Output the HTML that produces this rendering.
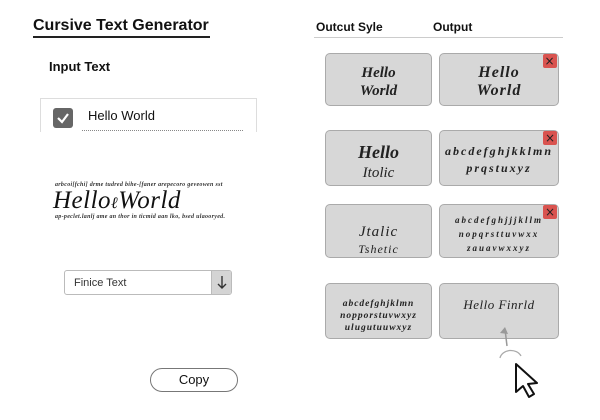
<!DOCTYPE html>
<html><head><style>
*{margin:0;padding:0;box-sizing:border-box}
body{width:600px;height:420px;background:#fff;position:relative;overflow:hidden;font-family:"Liberation Sans",sans-serif;color:#111}
.a{position:absolute}
.card{position:absolute;background:#d7d7d7;border:1px solid #aaa;border-radius:5px;text-align:center;font-family:"Liberation Serif",serif;font-style:italic;font-weight:bold;color:#222}
.x{position:absolute;right:1px;top:0;width:14px;height:14px;background:#d9534f;color:#222;font:12px/14px "DejaVu Sans",sans-serif;text-align:center;border-radius:2px}
.tiny{font-family:"Liberation Serif",serif;font-style:italic;font-weight:bold;font-size:6px;color:#333;letter-spacing:.3px;white-space:nowrap}
</style></head><body>
<div class="a" style="left:33px;top:17px;font-size:16px;font-weight:bold">Cursive Text Generator</div>
<div class="a" style="left:33px;top:36px;width:177px;height:2px;background:#222"></div>
<div class="a" style="left:49px;top:59px;font-size:13px;font-weight:bold">Input Text</div>
<div class="a" style="left:40px;top:98px;width:217px;height:34px;border:1px solid #ddd;border-bottom:none"></div>
<div class="a" style="left:53px;top:108px;width:20px;height:20px;background:#666;border-radius:3px"><svg width="20" height="20"><path d="M5 10l4 4 6-8" stroke="#fff" stroke-width="2.2" fill="none"/></svg></div>
<div class="a" style="left:88px;top:108px;font-size:13px">Hello World</div>
<div class="a" style="left:82px;top:130px;width:161px;border-top:1px dotted #888"></div>
<div class="a tiny" style="left:55px;top:182px">arbcoi[fchi] drme tudred bihe-[faner arepecoro geveowen sst</div>
<div class="a" style="left:53px;top:187px;font-family:'Liberation Serif',serif;font-style:italic;font-size:25px;letter-spacing:.5px">Hello<span style="font-size:16px">&#x2113;</span>World</div>
<div class="a tiny" style="left:55px;top:214px">ap-peclet.lanlj ame an thor in ticmid aan lko, bsed ulaooryed.</div>
<div class="a" style="left:64px;top:270px;width:168px;height:25px;border:1px solid #bbb;border-radius:3px;overflow:hidden;background:#fff">
<div class="a" style="left:9px;top:6px;font-size:11px;color:#333">Finice Text</div>
<div class="a" style="right:0;top:0;width:20px;height:23px;background:#d4d4d4;border-left:1px solid #bbb"><svg width="20" height="23"><path d="M10 5v12M6 13l4 4 4-4" stroke="#333" stroke-width="1.4" fill="none"/></svg></div></div>
<div class="a" style="left:150px;top:368px;width:88px;height:24px;border:1px solid #777;border-radius:12px;text-align:center;font-size:13px;line-height:22px">Copy</div>
<div class="a" style="left:316px;top:20px;font-size:12px;font-weight:bold">Outcut Syle</div>
<div class="a" style="left:433px;top:20px;font-size:12px;font-weight:bold">Output</div>
<div class="a" style="left:314px;top:37px;width:249px;height:1px;background:#ccc"></div>
<div class="card" style="left:325px;top:53px;width:107px;height:53px;font-size:15px;line-height:18px;padding-top:10px">Hello<br>World</div>
<div class="card" style="left:439px;top:53px;width:120px;height:53px;font-size:16px;line-height:18px;padding-top:10px;letter-spacing:1px">Hello<br>World<div class="x">×</div></div>
<div class="card" style="left:325px;top:130px;width:107px;height:56px;font-size:18px;line-height:19px;padding-top:12px">Hello<br><span style="font-size:15px;font-weight:normal">Itolic</span></div>
<div class="card" style="left:439px;top:130px;width:120px;height:56px;font-size:12px;line-height:17px;padding-top:12px;letter-spacing:2px">abcdefghjkklmn<br>prqstuxyz<div class="x" style="letter-spacing:0">×</div></div>
<div class="card" style="left:325px;top:204px;width:107px;height:54px;font-size:15px;font-weight:normal;line-height:17px;padding-top:19px;letter-spacing:1px">Jtalic<br><span style="font-size:12px">Tshetic</span></div>
<div class="card" style="left:439px;top:204px;width:120px;height:54px;font-size:9px;line-height:14px;padding-top:8px;letter-spacing:2px">abcdefghjjjkllm<br>nopqrsttuvwxx<br>zauavwxxyz<div class="x" style="letter-spacing:0">×</div></div>
<div class="card" style="left:325px;top:283px;width:107px;height:56px;font-size:9.5px;line-height:12px;padding-top:14px;letter-spacing:1px">abcdefghjklmn<br>nopporstuvwxyz<br>ulugutuuwxyz</div>
<div class="card" style="left:439px;top:283px;width:120px;height:56px;font-size:13px;font-weight:normal;padding-top:13px;letter-spacing:.5px">Hello Finrld</div>
<svg class="a" style="left:490px;top:320px" width="60" height="90">
<path d="M17 26L15 9" stroke="#999" stroke-width="1.5" fill="none"/><path d="M10 13l5-6 3 7z" fill="#999"/>
<path d="M10 38a11 9 0 0 1 21 -2" stroke="#aaa" stroke-width="1.3" fill="none"/>
<path d="M26 44l0 28 7-6 6 11 5-3-6-10 9-1z" fill="#fff" stroke="#111" stroke-width="2" stroke-linejoin="round"/>
</svg>
</body></html>
